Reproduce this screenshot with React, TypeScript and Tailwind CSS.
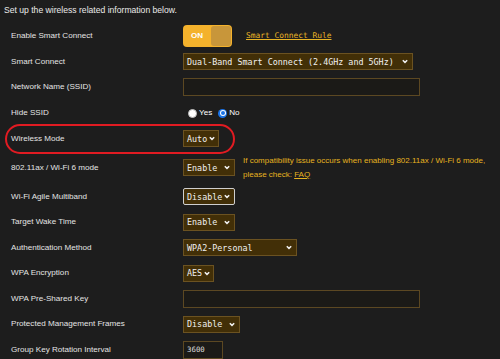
import type { ReactNode } from "react";

const mono = "font-['DejaVu_Sans_Mono','Liberation_Mono',monospace]";

function Chevron() {
  return (
    <svg width="6" height="5" viewBox="0 0 6 5" className="ml-[2px] shrink-0">
      <path d="M0.8 1.2 L3 3.4 L5.2 1.2" fill="none" stroke="#f2f2f2" strokeWidth="1.5" />
    </svg>
  );
}

function Select({ value, width, focused = false }: { value: string; width: string; focused?: boolean }) {
  return (
    <div
      className={`flex h-[17px] items-center justify-between bg-[#422f07] pl-[3px] pr-[4px] ${mono} text-[8.4px] text-[#f0f0f0] ${width} ${
        focused ? "rounded-[2px] border border-[#cfcfcf]" : "border border-[#6b5221]"
      }`}
    >
      <span>{value}</span>
      <Chevron />
    </div>
  );
}

function TextInput({ width, value }: { width: string; value?: string }) {
  return (
    <div
      className={`flex h-[18px] items-center border border-[#5c4822] bg-[#1b1a17] pl-[3px] ${mono} text-[7.4px] text-[#dcdcdc] ${width}`}
    >
      {value}
    </div>
  );
}

function Row({ label, h = "h-[25.7px]", children }: { label: string; h?: string; children: ReactNode }) {
  return (
    <div className={`flex items-center ${h}`}>
      <div className="w-[183px] shrink-0 pl-[11px]">{label}</div>
      <div className="flex items-center">{children}</div>
    </div>
  );
}

function Radio({ checked }: { checked: boolean }) {
  return checked ? (
    <span className="flex h-[9px] w-[9px] items-center justify-center rounded-full bg-[#1a73e8]">
      <span className="flex h-[6px] w-[6px] items-center justify-center rounded-full bg-white">
        <span className="h-[4px] w-[4px] rounded-full bg-[#1a73e8]" />
      </span>
    </span>
  ) : (
    <span className="h-[9px] w-[9px] rounded-full border border-[#bdbdbd] bg-white" />
  );
}

export default function App() {
  return (
    <div className="h-[359px] w-[500px] overflow-hidden bg-[#1d1d1d] font-['Liberation_Sans',Arial,sans-serif] text-[8.1px] leading-none text-[#e4e4e4]">
      <div className="mb-[3.25px] flex h-[20px] items-center pl-[4px] text-[8.6px] text-[#eaeaea]">
        Set up the wireless related information below.
      </div>

      <Row label="Enable Smart Connect">
        <div className="flex h-[22px] w-[49px] overflow-hidden rounded-[4px] bg-[#f4b22c]">
          <div className="flex w-[28px] items-center justify-center text-[8px] font-bold text-white">ON</div>
          <div className="my-[1px] mr-[1px] flex-1 rounded-[3px] bg-[#c8963a]" />
        </div>
        <span className={`ml-[14px] ${mono} text-[7.9px] text-[#e9b526] underline`}>Smart Connect Rule</span>
      </Row>

      <Row label="Smart Connect">
        <Select value="Dual-Band Smart Connect (2.4GHz and 5GHz)" width="w-[230px]" />
      </Row>

      <Row label="Network Name (SSID)">
        <TextInput width="w-[237px]" />
      </Row>

      <Row label="Hide SSID">
        <div className="flex items-center pl-[5px] text-white">
          <Radio checked={false} />
          <span className="ml-[2px]">Yes</span>
          <span className="ml-[6px]">
            <Radio checked={true} />
          </span>
          <span className="ml-[2px]">No</span>
        </div>
      </Row>

      <div className="relative">
        <Row label="Wireless Mode">
          <Select value="Auto" width="w-[36px]" />
        </Row>
        <div className="pointer-events-none absolute left-[5px] top-[-2px] h-[30px] w-[230px] rounded-[15px] border-[2.5px] border-[#e11b22]" />
      </div>

      <Row label="802.11ax / Wi-Fi 6 mode" h="h-[32.5px]">
        <Select value="Enable" width="w-[52px]" />
        <div className="ml-[8px] text-[8px] leading-[14px] text-[#e6b31f]">
          <div>If compatibility issue occurs when enabling 802.11ax / Wi-Fi 6 mode,</div>
          <div>
            please check: <span className="underline">FAQ</span>
          </div>
        </div>
      </Row>

      <Row label="Wi-Fi Agile Multiband" h="h-[25.5px]">
        <Select value="Disable" width="w-[52px]" focused />
      </Row>

      <Row label="Target Wake Time" h="h-[25.5px]">
        <Select value="Enable" width="w-[52px]" />
      </Row>

      <Row label="Authentication Method" h="h-[25.5px]">
        <Select value="WPA2-Personal" width="w-[114px]" />
      </Row>

      <Row label="WPA Encryption" h="h-[25.5px]">
        <Select value="AES" width="w-[31px]" />
      </Row>

      <Row label="WPA Pre-Shared Key" h="h-[25.5px]">
        <TextInput width="w-[237px]" />
      </Row>

      <Row label="Protected Management Frames" h="h-[25.5px]">
        <Select value="Disable" width="w-[57px]" />
      </Row>

      <Row label="Group Key Rotation Interval" h="h-[25.5px]">
        <TextInput width="w-[40px]" value="3600" />
      </Row>
    </div>
  );
}
